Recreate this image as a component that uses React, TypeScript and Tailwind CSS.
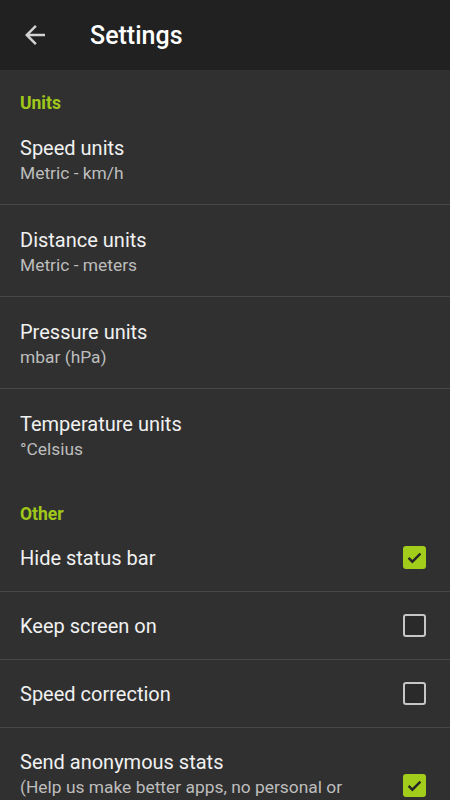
import React from "react";

type Pref = { title: string; summary?: string; checked?: boolean };

const font = { fontFamily: "Roboto, 'Noto Sans', sans-serif" };

function Category({ label }: { label: string }) {
  return (
    <div className="h-[43px] pl-5 pt-[23px] text-[17.5px] leading-[20px] font-bold text-[#a0c81a]">
      {label}
    </div>
  );
}

function ListPref({ title, summary, last }: { title: string; summary: string; last?: boolean }) {
  return (
    <div className={`h-[92px] pl-5 pt-[23px] ${last ? "" : "border-b border-[#474747]"}`}>
      <div className="text-[20px] leading-[24px] text-[#f1f1f1]">{title}</div>
      <div className="mt-[2px] text-[17.4px] leading-[22px] text-[#bdbdbd]">{summary}</div>
    </div>
  );
}

function Checkbox({ checked }: { checked?: boolean }) {
  if (checked) {
    return (
      <div className="w-[23px] h-[23px] rounded-[3px] bg-[#a2cd1b] flex items-center justify-center">
        <svg width="19" height="19" viewBox="0 0 24 24">
          <path d="M4.5 12.5l4.8 4.8L19.5 7" fill="none" stroke="#262626" strokeWidth="3" />
        </svg>
      </div>
    );
  }
  return <div className="w-[23px] h-[23px] rounded-[3px] border-2 border-[#c6c6c6] bg-[#2a2a2a]" />;
}

function CheckPref({ title, summary, checked, last }: Pref & { last?: boolean }) {
  return (
    <div
      className={`flex items-center pl-5 pr-6 ${summary ? "py-[22px]" : "h-[68px]"} ${
        last ? "" : "border-b border-[#474747]"
      }`}
    >
      <div className="flex-1 pr-12">
        <div className="text-[20px] leading-[24px] text-[#f1f1f1]">{title}</div>
        {summary && (
          <div className="mt-[2px] text-[17.4px] leading-[22px] text-[#bdbdbd]">{summary}</div>
        )}
      </div>
      <Checkbox checked={checked} />
    </div>
  );
}

export default function App() {
  return (
    <div className="w-[450px] h-[800px] overflow-hidden bg-[#303030]" style={font}>
      <header className="h-[70px] bg-[#212121] flex items-center">
        <div className="w-[90px] pl-5">
          <svg width="30" height="30" viewBox="0 0 24 24">
            <path
              d="M20 11H7.83l5.59-5.59L12 4l-8 8 8 8 1.41-1.41L7.83 13H20v-2z"
              fill="#d2d2d2"
            />
          </svg>
        </div>
        <h1 className="text-[25px] font-medium text-white leading-none">Settings</h1>
      </header>

      <Category label="Units" />
      <ListPref title="Speed units" summary="Metric - km/h" />
      <ListPref title="Distance units" summary="Metric - meters" />
      <ListPref title="Pressure units" summary="mbar (hPa)" />
      <ListPref title="Temperature units" summary="°Celsius" last />

      <Category label="Other" />
      <CheckPref title="Hide status bar" checked />
      <CheckPref title="Keep screen on" />
      <CheckPref title="Speed correction" />
      <CheckPref
        title="Send anonymous stats"
        summary="(Help us make better apps, no personal or identifiable data is collected)"
        checked
        last
      />
    </div>
  );
}
